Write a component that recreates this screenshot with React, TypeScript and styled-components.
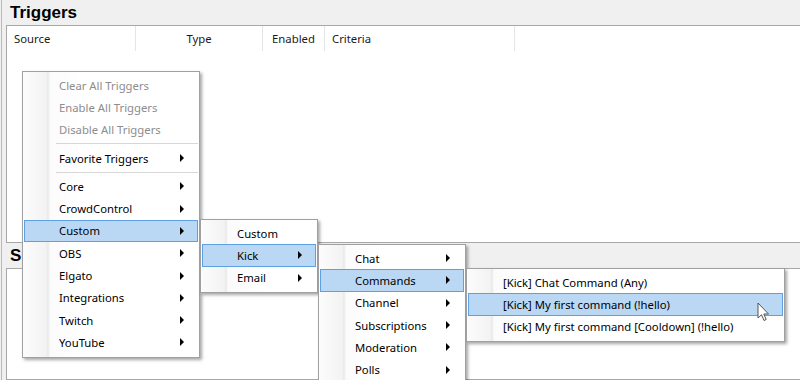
import React from 'react';
import styled, { createGlobalStyle } from 'styled-components';

const GlobalStyle = createGlobalStyle`
  html, body {
    margin: 0;
    padding: 0;
    background: #f0f0f0;
  }
`;

type MenuEntry =
  | { label: string; disabled?: boolean; sub?: boolean; active?: boolean }
  | 'sep';

interface MenuData {
  left: number;
  top: number;
  width: number;
  items: MenuEntry[];
}

const menus: MenuData[] = [
  {
    left: 22,
    top: 71,
    width: 178,
    items: [
      { label: 'Clear All Triggers', disabled: true },
      { label: 'Enable All Triggers', disabled: true },
      { label: 'Disable All Triggers', disabled: true },
      'sep',
      { label: 'Favorite Triggers', sub: true },
      'sep',
      { label: 'Core', sub: true },
      { label: 'CrowdControl', sub: true },
      { label: 'Custom', sub: true, active: true },
      { label: 'OBS', sub: true },
      { label: 'Elgato', sub: true },
      { label: 'Integrations', sub: true },
      { label: 'Twitch', sub: true },
      { label: 'YouTube', sub: true }
    ]
  },
  {
    left: 200,
    top: 219,
    width: 118,
    items: [
      { label: 'Custom' },
      { label: 'Kick', sub: true, active: true },
      { label: 'Email', sub: true }
    ]
  },
  {
    left: 318,
    top: 244,
    width: 148,
    items: [
      { label: 'Chat', sub: true },
      { label: 'Commands', sub: true, active: true },
      { label: 'Channel', sub: true },
      { label: 'Subscriptions', sub: true },
      { label: 'Moderation', sub: true },
      { label: 'Polls', sub: true }
    ]
  },
  {
    left: 466,
    top: 268,
    width: 319,
    items: [
      { label: '[Kick] Chat Command (Any)' },
      { label: '[Kick] My first command (!hello)', active: true },
      { label: '[Kick] My first command [Cooldown] (!hello)' }
    ]
  }
];

const columns = [
  { title: 'Source', width: 129, align: 'left' },
  { title: 'Type', width: 127, align: 'center' },
  { title: 'Enabled', width: 62, align: 'center' },
  { title: 'Criteria', width: 190, align: 'left' }
];

const Window = styled.div`
  position: relative;
  width: 800px;
  height: 380px;
  overflow: hidden;
  display: flex;
  flex-direction: column;
  background: linear-gradient(
    90deg,
    #f0f0f0 1px,
    #b9b9b9 1px,
    #b9b9b9 2px,
    #f0f0f0 2px
  );
  font-family: 'Noto Sans', 'Open Sans', sans-serif;
  font-size: 11.3px;
  color: #000;
`;

const SectionTitle = styled.div`
  height: 25px;
  padding-left: 10px;
  display: flex;
  align-items: center;
  font-family: 'Liberation Sans', Arial, sans-serif;
  font-weight: bold;
  font-size: 17px;
  flex: none;
`;

const ListPanel = styled.div<{ $height?: number }>`
  margin-left: 6px;
  background: #fff;
  border: 1px solid #a8a8a8;
  border-right: none;
  box-sizing: border-box;
  ${(p) => (p.$height ? `height: ${p.$height}px; flex: none;` : 'flex: 1;')}
`;

const HeaderRow = styled.div`
  display: flex;
  height: 25px;
`;

const HeaderCell = styled.div<{ $width: number; $align: string }>`
  width: ${(p) => p.$width}px;
  flex: none;
  box-sizing: border-box;
  border-right: 1px solid #e5e5e5;
  display: flex;
  align-items: center;
  justify-content: ${(p) => (p.$align === 'center' ? 'center' : 'flex-start')};
  padding-left: ${(p) => (p.$align === 'center' ? 0 : 7)}px;
  color: #1a1a1a;
`;

const Menu = styled.div<{ $left: number; $top: number; $width: number }>`
  position: absolute;
  left: ${(p) => p.$left}px;
  top: ${(p) => p.$top}px;
  width: ${(p) => p.$width}px;
  box-sizing: border-box;
  padding: 2px 0 3px;
  border: 1px solid #a0a0a0;
  background: linear-gradient(
    90deg,
    #fcfcfc 0px,
    #f3f3f3 23px,
    #e9e9e9 25px,
    #fbfbfb 27px,
    #fff 60px
  );
  box-shadow: 2px 2px 3px rgba(0, 0, 0, 0.35);
`;

const Item = styled.div<{ $disabled?: boolean; $active?: boolean }>`
  position: relative;
  height: 22.3px;
  margin: 0 1px;
  box-sizing: border-box;
  padding-left: 34px;
  display: flex;
  align-items: center;
  white-space: nowrap;
  border: 1px solid ${(p) => (p.$active ? '#5da1e4' : 'transparent')};
  background: ${(p) => (p.$active ? '#bad8f4' : 'transparent')};
  color: ${(p) => (p.$disabled ? '#8d8d8d' : '#000')};
`;

const Arrow = styled.span`
  position: absolute;
  right: 13px;
  top: 50%;
  margin-top: -4px;
  width: 0;
  height: 0;
  border-top: 4px solid transparent;
  border-bottom: 4px solid transparent;
  border-left: 4px solid #000;
`;

const Separator = styled.div`
  height: 6px;
  margin-left: 33px;
  margin-right: 1px;
  display: flex;
  align-items: center;

  &::after {
    content: '';
    flex: 1;
    height: 1px;
    background: #d7d7d7;
  }
`;

const Cursor = styled.svg`
  position: absolute;
  left: 757px;
  top: 302px;
`;

const ContextMenu: React.FC<{ data: MenuData }> = ({ data }) => (
  <Menu $left={data.left} $top={data.top} $width={data.width}>
    {data.items.map((it, i) =>
      it === 'sep' ? (
        <Separator key={i} />
      ) : (
        <Item key={i} $disabled={it.disabled} $active={it.active}>
          {it.label}
          {it.sub && <Arrow />}
        </Item>
      )
    )}
  </Menu>
);

export default function App() {
  return (
    <>
      <GlobalStyle />
      <Window>
        <SectionTitle>Triggers</SectionTitle>
        <ListPanel $height={218}>
          <HeaderRow>
            {columns.map((c) => (
              <HeaderCell key={c.title} $width={c.width} $align={c.align}>
                {c.title}
              </HeaderCell>
            ))}
          </HeaderRow>
        </ListPanel>
        <SectionTitle>Sub-Actions</SectionTitle>
        <ListPanel />

        {menus.map((m, i) => (
          <ContextMenu key={i} data={m} />
        ))}

        <Cursor width="14" height="21" viewBox="0 0 14 21">
          <path
            d="M1 1 L1 16 L4.5 12.8 L7 18.5 L9.2 17.5 L6.8 12 L11.5 12 Z"
            fill="#fff"
            stroke="#555"
            strokeWidth="1"
            strokeLinejoin="round"
          />
        </Cursor>
      </Window>
    </>
  );
}
